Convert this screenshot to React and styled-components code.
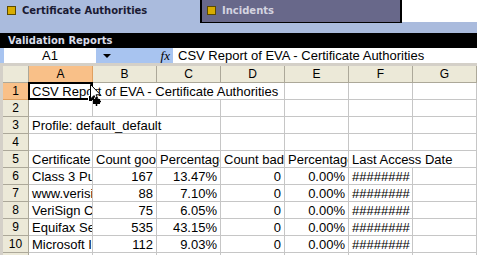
import styled, { createGlobalStyle } from "styled-components";

const GlobalStyle = createGlobalStyle`
  html, body {
    margin: 0;
    padding: 0;
    background: #fff;
  }
  body {
    width: 477px;
    height: 255px;
    overflow: hidden;
    font-family: "Liberation Sans", Arial, sans-serif;
  }
`;

const Page = styled.div`
  width: 477px;
  height: 255px;
  overflow: hidden;
  display: flex;
  flex-direction: column;
  & > * {
    flex-shrink: 0;
  }
`;

const TabBar = styled.div`
  display: flex;
  height: 23px;
  background: #aabbdd;
`;

const Tab = styled.div`
  box-sizing: border-box;
  width: ${(p) => (p.$active ? "200px" : "202px")};
  height: ${(p) => (p.$active ? "23px" : "24px")};
  display: flex;
  align-items: center;
  gap: 6px;
  padding: 0 0 2px ${(p) => (p.$active ? "7px" : "5px")};
  background: ${(p) => (p.$active ? "#aabbdd" : "#68688a")};
  border: ${(p) => (p.$active ? "none" : "2px solid #000")};
  border-top: none;
  color: ${(p) => (p.$active ? "#1a1a33" : "#d4d4e0")};
  font-family: "DejaVu Sans", Verdana, sans-serif;
  font-weight: bold;
  font-size: 10px;
  white-space: nowrap;
`;

const TabIcon = styled.span`
  box-sizing: border-box;
  width: 9px;
  height: 9px;
  flex: none;
  background: #d8ac00;
  border: 1px solid #5c4a00;
`;

const TabFill = styled.div`
  flex: 1;
  height: 22px;
  background: #fff;
`;

const TabStrip = styled.div`
  height: 10px;
  background: #aabbdd;
`;

const PanelTitle = styled.div`
  height: 15px;
  line-height: 15px;
  background: #000;
  color: #d8dce8;
  padding-left: 8px;
  font-family: "DejaVu Sans", Verdana, sans-serif;
  font-weight: bold;
  font-size: 10px;
`;

const FormulaBar = styled.div`
  display: flex;
  height: 15px;
  background: #a8c4f0;
  padding-left: 4px;
  font-size: 13px;
  line-height: 15px;
  color: #000;
`;

const NameBox = styled.div`
  width: 92px;
  background: #fff;
  text-align: center;
`;

const NameDrop = styled.div`
  flex: 1;
  display: flex;
  align-items: center;
  padding: 0 3px 0 7px;
`;

const DropArrow = styled.span`
  width: 0;
  height: 0;
  border-left: 4px solid transparent;
  border-right: 4px solid transparent;
  border-top: 4px solid #000;
`;

const Fx = styled.span`
  margin-left: auto;
  font-family: "Liberation Serif", "Times New Roman", serif;
  font-style: italic;
  font-size: 13px;
`;

const FormulaInput = styled.div`
  width: 304px;
  background: #fff;
  padding-left: 5px;
  box-sizing: border-box;
  white-space: nowrap;
`;

const Sheet = styled.div`
  border-top: 3px solid #d4d0c8;
  border-left: 3px solid #d4d0c8;
  display: grid;
  grid-template-columns: 26px repeat(7, 64px);
  grid-auto-rows: 17px;
  align-content: start;
`;

const Head = styled.div`
  box-sizing: border-box;
  background: ${(p) => (p.$selected ? "#f9c088" : "#ece9d8")};
  border-right: 1px solid ${(p) => (p.$selected ? "#e0a060" : "#aca899")};
  border-bottom: 1px solid ${(p) => (p.$selected ? "#e0a060" : "#aca899")};
  text-align: center;
  font-size: 12px;
  line-height: 17px;
  color: #000;
`;

const Cell = styled.div`
  position: relative;
  box-sizing: border-box;
  grid-column: span ${(p) => p.$span || 1};
  border-right: 1px solid #c6c6c6;
  border-bottom: 1px solid #c6c6c6;
  padding: 0 3px 0 3px;
  font-size: 13px;
  line-height: 17px;
  color: #000;
  white-space: nowrap;
  overflow: ${(p) => (p.$selected ? "visible" : "hidden")};
  text-align: ${(p) => (p.$right ? "right" : "left")};
`;

const Selection = styled.div`
  position: absolute;
  left: -1px;
  top: -1px;
  width: 65px;
  height: 18px;
  box-sizing: border-box;
  border: 2px solid #000;
  pointer-events: none;
`;

const FillHandle = styled.span`
  position: absolute;
  right: -4px;
  bottom: -4px;
  width: 5px;
  height: 5px;
  background: #000;
  border: 1px solid #fff;
`;

const Cursor = styled.svg`
  position: absolute;
  left: 61px;
  top: 1px;
  overflow: visible;
`;

const names = [
  "Class 3 Public Primary Certification Authority",
  "www.verisign.com/CPS Incorp.by Ref.",
  "VeriSign Class 3 Secure Server CA",
  "Equifax Secure Certificate Authority",
  "Microsoft Internet Authority",
];

const stats = [
  ["167", "13.47%"],
  ["88", "7.10%"],
  ["75", "6.05%"],
  ["535", "43.15%"],
  ["112", "9.03%"],
];

const empty = (n) => Array.from({ length: n }, () => ({}));

const rows = [
  [{ text: "CSV Report of EVA - Certificate Authorities", span: 4, selected: true }, ...empty(3)],
  empty(7),
  [{ text: "Profile: default_default", span: 3 }, ...empty(4)],
  empty(7),
  [
    { text: "Certificate" },
    { text: "Count good" },
    { text: "Percentage" },
    { text: "Count bad" },
    { text: "Percentage" },
    { text: "Last Access Date", span: 2 },
  ],
  ...names.map((name, i) => [
    { text: name },
    { text: stats[i][0], right: true },
    { text: stats[i][1], right: true },
    { text: "0", right: true },
    { text: "0.00%", right: true },
    { text: "########" },
    {},
  ]),
  empty(7),
];

const letters = ["A", "B", "C", "D", "E", "F", "G"];

function MoveCursor() {
  return (
    <Cursor width="14" height="22" viewBox="0 0 14 22">
      <path
        d="M0.5 0.5 L0.5 15 L4 11.5 L6.5 17 L8.5 16 L6 10.8 L10.5 10.8 Z"
        fill="#fff"
        stroke="#000"
        strokeWidth="1"
      />
      <path d="M3 15 h7 v5 h-7 z" fill="#000" />
      <path d="M6.5 13 v9 M2 17.5 h9" stroke="#000" strokeWidth="1.5" />
    </Cursor>
  );
}

export default function App() {
  return (
    <Page>
      <GlobalStyle />
      <TabBar>
        <Tab $active>
          <TabIcon />
          Certificate Authorities
        </Tab>
        <Tab>
          <TabIcon />
          Incidents
        </Tab>
        <TabFill />
      </TabBar>
      <TabStrip />
      <PanelTitle>Validation Reports</PanelTitle>
      <FormulaBar>
        <NameBox>A1</NameBox>
        <NameDrop>
          <DropArrow />
          <Fx>fx</Fx>
        </NameDrop>
        <FormulaInput>CSV Report of EVA - Certificate Authorities</FormulaInput>
      </FormulaBar>
      <Sheet>
        <Head />
        {letters.map((l) => (
          <Head key={l} $selected={l === "A"}>
            {l}
          </Head>
        ))}
        {rows.map((row, r) => [
          <Head key={`h${r}`} $selected={r === 0}>
            {r + 1}
          </Head>,
          ...row.map((c, i) => (
            <Cell key={`${r}-${i}`} $span={c.span} $right={c.right} $selected={c.selected}>
              {c.text}
              {c.selected && (
                <>
                  <Selection>
                    <FillHandle />
                  </Selection>
                  <MoveCursor />
                </>
              )}
            </Cell>
          )),
        ])}
      </Sheet>
    </Page>
  );
}
